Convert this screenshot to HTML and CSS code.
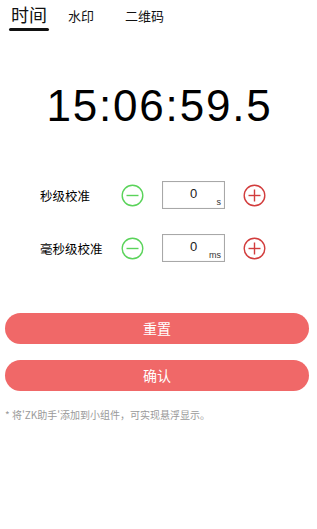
FILE: index.html
```html
<!DOCTYPE html>
<html lang="zh">
<head>
<meta charset="utf-8">
<link rel="stylesheet" href="styles.css">
</head>
<body>
<div class="tabs">
  <div class="tab active">时间</div>
  <div class="tab t2">水印</div>
  <div class="tab t3">二维码</div>
</div>
<div class="clock">15:06:59.5</div>
<div class="rows">
  <div class="row">
    <div class="label">秒级校准</div>
    <svg class="btn-ic" width="23" height="23" viewBox="0 0 23 23"><circle cx="11.5" cy="11.5" r="10.3" fill="none" stroke="#5ad35a" stroke-width="1.4"/><line x1="5.5" y1="11.5" x2="17.5" y2="11.5" stroke="#5ad35a" stroke-width="1.4"/></svg>
    <div class="box"><span class="val">0</span><span class="unit">s</span></div>
    <svg class="btn-ic" width="23" height="23" viewBox="0 0 23 23"><circle cx="11.5" cy="11.5" r="10.3" fill="none" stroke="#d23c3c" stroke-width="1.4"/><line x1="5.5" y1="11.5" x2="17.5" y2="11.5" stroke="#d23c3c" stroke-width="1.4"/><line x1="11.5" y1="5.5" x2="11.5" y2="17.5" stroke="#d23c3c" stroke-width="1.4"/></svg>
  </div>
  <div class="row">
    <div class="label">毫秒级校准</div>
    <svg class="btn-ic" width="23" height="23" viewBox="0 0 23 23"><circle cx="11.5" cy="11.5" r="10.3" fill="none" stroke="#5ad35a" stroke-width="1.4"/><line x1="5.5" y1="11.5" x2="17.5" y2="11.5" stroke="#5ad35a" stroke-width="1.4"/></svg>
    <div class="box"><span class="val">0</span><span class="unit">ms</span></div>
    <svg class="btn-ic" width="23" height="23" viewBox="0 0 23 23"><circle cx="11.5" cy="11.5" r="10.3" fill="none" stroke="#d23c3c" stroke-width="1.4"/><line x1="5.5" y1="11.5" x2="17.5" y2="11.5" stroke="#d23c3c" stroke-width="1.4"/><line x1="11.5" y1="5.5" x2="11.5" y2="17.5" stroke="#d23c3c" stroke-width="1.4"/></svg>
  </div>
</div>
<div class="actions">
  <div class="pill">重置</div>
  <div class="pill">确认</div>
</div>
<div class="note">* 将'ZK助手'添加到小组件，可实现悬浮显示。</div>
</body>
</html>
```
FILE: styles.css
```css
html, body {
  margin: 0;
  padding: 0;
  background: #fff;
}
body {
  font-family: "Noto Sans CJK SC", "Noto Sans", sans-serif;
  color: #111;
  width: 317px;
}
.tabs {
  display: flex;
  align-items: flex-end;
  height: 32px;
  padding-left: 9px;
}
.tab {
  font-size: 13px;
  line-height: 20px;
  color: #111;
  padding-bottom: 6px;
}
.tab.active {
  width: 40px;
  text-align: center;
  font-size: 18px;
  line-height: 22px;
  padding-bottom: 7px;
  position: relative;
}
.tab.active::after {
  content: "";
  position: absolute;
  left: 0;
  right: 0;
  bottom: 1px;
  height: 3px;
  border-radius: 2px;
  background: #111;
}
.t2 { margin-left: 19px; }
.t3 { margin-left: 31px; }
.clock {
  margin-top: 52px;
  text-align: center;
  font-family: "Liberation Sans", Arial, sans-serif;
  font-size: 44px;
  line-height: 44px;
  letter-spacing: 1.8px;
  padding-left: 2px;
  color: #000;
}
.rows {
  margin-top: 53px;
  display: flex;
  flex-direction: column;
  gap: 25px;
  padding-left: 40px;
}
.row {
  display: flex;
  align-items: center;
  height: 28px;
}
.label {
  width: 81px;
  font-size: 12.5px;
  color: #000;
}
.btn-ic { display: block; }
.box {
  margin-left: 18px;
  margin-right: 18px;
  width: 61px;
  height: 26px;
  border: 1px solid #a8a8a8;
  box-shadow: inset 0 0 1px #ccc;
  position: relative;
  display: flex;
  align-items: center;
  justify-content: center;
}
.val {
  font-family: "Liberation Sans", Arial, sans-serif;
  font-size: 13px;
  color: #222;
  margin-top: -3px;
}
.unit {
  position: absolute;
  right: 3px;
  bottom: 1px;
  font-family: "Liberation Sans", Arial, sans-serif;
  font-size: 9px;
  line-height: 10px;
  color: #333;
}
.actions {
  margin-top: 51px;
  margin-left: 5px;
  width: 304px;
  display: flex;
  flex-direction: column;
  gap: 16px;
}
.pill {
  height: 31px;
  border-radius: 16px;
  background: #f06868;
  color: #fff;
  font-size: 14px;
  line-height: 31px;
  text-align: center;
}
.note {
  margin-top: 18px;
  margin-left: 5px;
  font-size: 10px;
  line-height: 12px;
  color: #9a9a9a;
}
```
